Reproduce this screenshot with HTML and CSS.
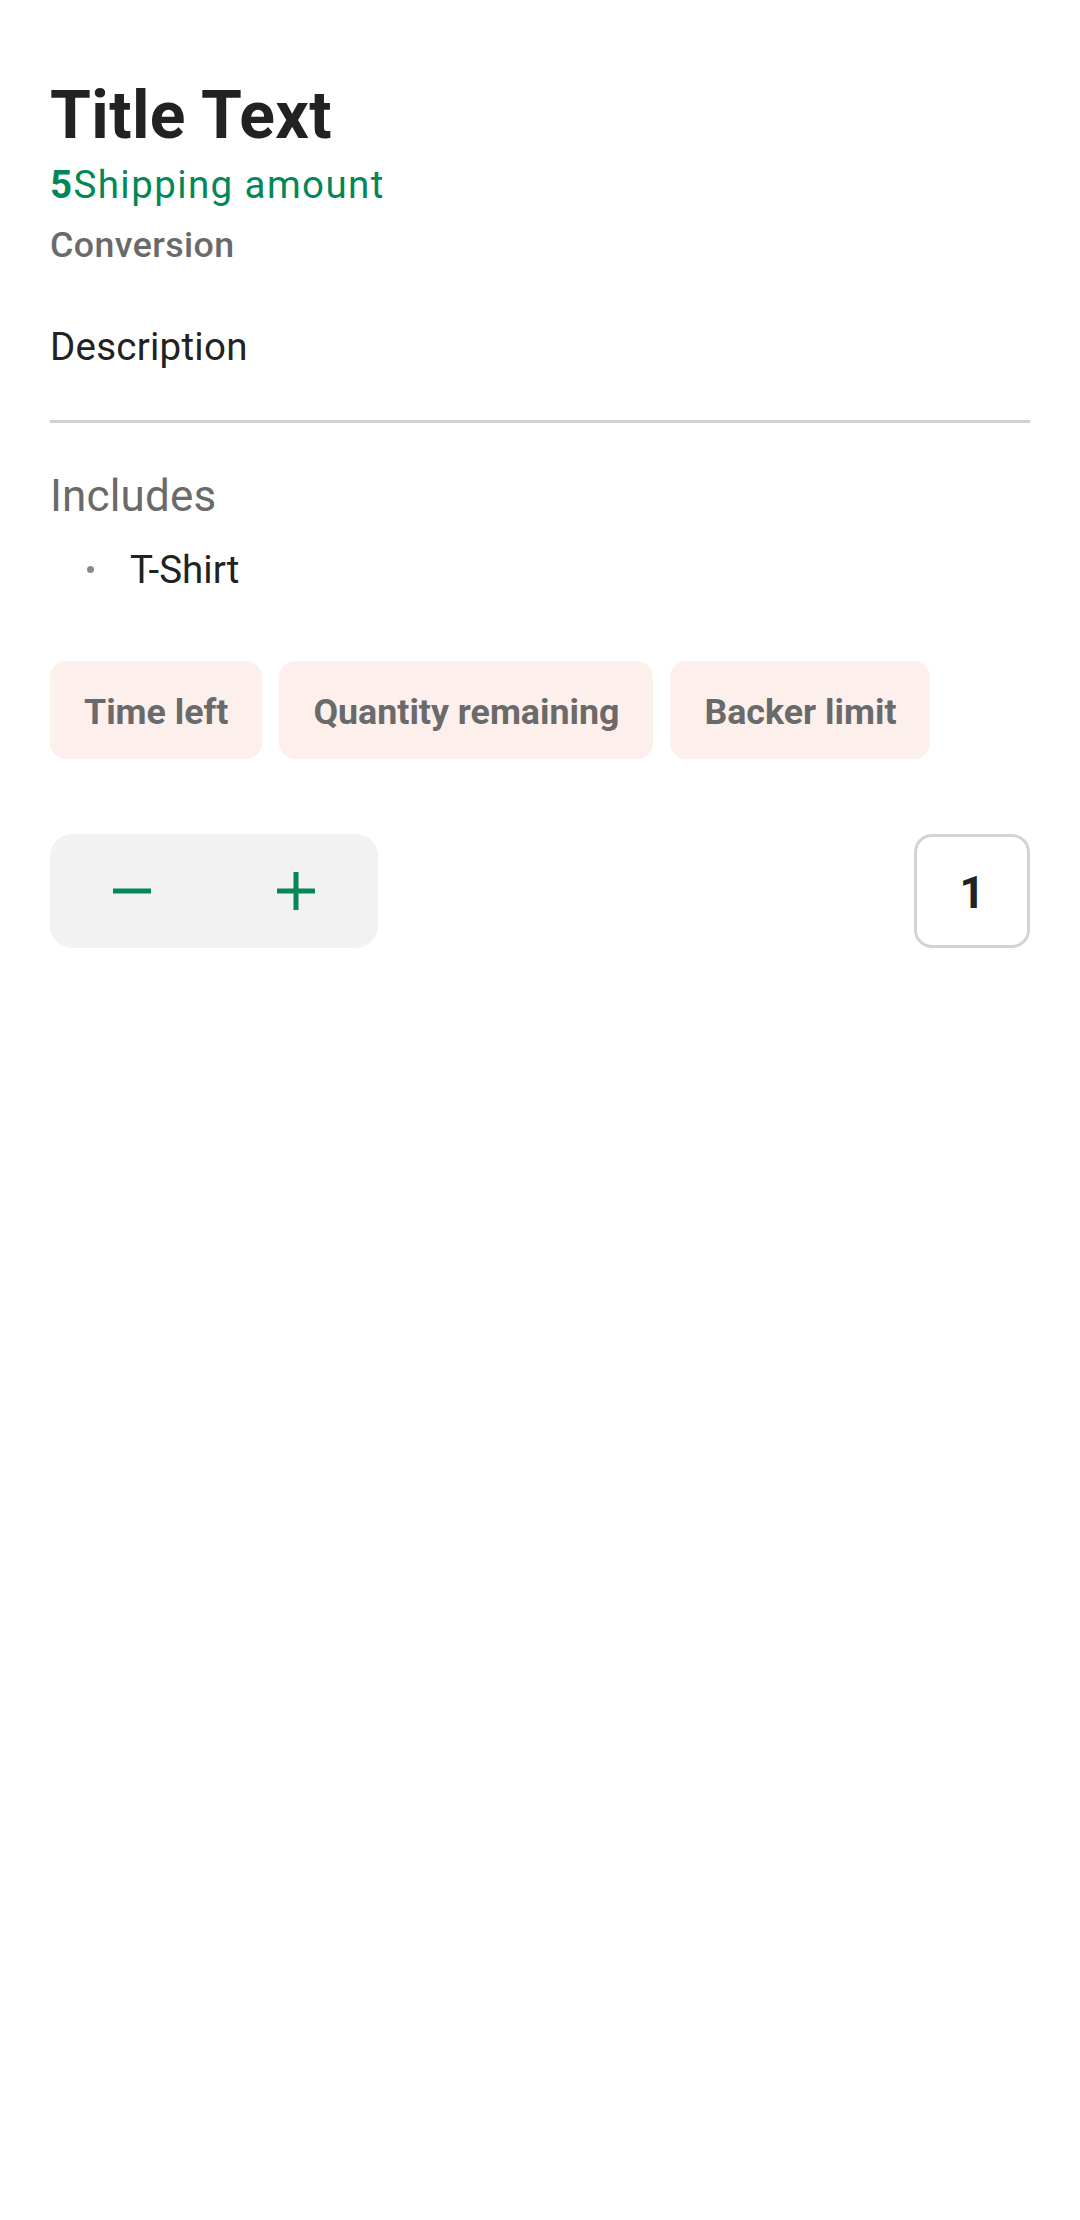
FILE: index.html
```html
<!DOCTYPE html>
<html>
<head>
<meta charset="utf-8">
<link rel="stylesheet" href="styles.css">
</head>
<body>
<main class="page">
  <h1 class="title">Title Text</h1>
  <div class="shipping"><span class="shipping-amount">5</span>Shipping amount</div>
  <div class="conversion">Conversion</div>
  <p class="description">Description</p>
  <hr class="divider">
  <h2 class="includes-title">Includes</h2>
  <ul class="includes-list">
    <li class="includes-item"><span class="bullet"></span><span>T-Shirt</span></li>
  </ul>
  <div class="chips">
    <span class="chip">Time left</span>
    <span class="chip">Quantity remaining</span>
    <span class="chip">Backer limit</span>
  </div>
  <div class="quantity-row">
    <div class="stepper">
      <button class="step-btn" aria-label="Decrease">
        <svg width="38" height="38" viewBox="0 0 38 38"><rect x="0" y="16.5" width="38" height="5" fill="#038757"/></svg>
      </button>
      <button class="step-btn" aria-label="Increase">
        <svg width="38" height="38" viewBox="0 0 38 38"><rect x="0" y="16.5" width="38" height="5" fill="#038757"/><rect x="16.5" y="0" width="5" height="38" fill="#038757"/></svg>
      </button>
    </div>
    <div class="qty-box">1</div>
  </div>
</main>
</body>
</html>
```

FILE: styles.css
```css
html, body {
  margin: 0;
  padding: 0;
  background: #ffffff;
}

body {
  font-family: Roboto, "Noto Sans", "Liberation Sans", sans-serif;
  color: #222222;
}

.page {
  padding: 77px 50px 0 50px;
  display: flex;
  flex-direction: column;
}

.title {
  margin: 0;
  font-size: 66px;
  font-weight: 700;
  line-height: normal;
  letter-spacing: 0.4px;
  color: #222222;
}

.shipping {
  margin-top: 8px;
  font-size: 38.5px;
  line-height: normal;
  letter-spacing: 1.4px;
  color: #038757;
}

.shipping-amount {
  font-weight: 700;
}

.conversion {
  margin-top: 17px;
  font-size: 35.75px;
  font-weight: 500;
  line-height: normal;
  letter-spacing: 0.4px;
  color: #6a6a6a;
}

.description {
  margin: 58px 0 0 0;
  font-size: 38.5px;
  line-height: normal;
  letter-spacing: 0.25px;
  color: #222222;
}

.divider {
  margin: 51px 0 0 0;
  border: 0;
  height: 3px;
  background: #d1d1d1;
}

.includes-title {
  margin: 47px 0 0 0;
  font-size: 44px;
  font-weight: 400;
  line-height: normal;
  letter-spacing: 0.15px;
  color: #6a6a6a;
}

.includes-list {
  list-style: none;
  margin: 25px 0 0 0;
  padding: 0;
}

.includes-item {
  display: flex;
  align-items: center;
  font-size: 38.5px;
  line-height: normal;
  color: #222222;
}

.bullet {
  width: 7px;
  height: 7px;
  border-radius: 50%;
  background: #8a8a8a;
  margin-left: 37px;
  margin-right: 36px;
}

.chips {
  margin-top: 69px;
  display: flex;
  gap: 17px;
}

.chip {
  background: #fdf0ec;
  border-radius: 16px;
  padding: 30px 34px 26px 34px;
  font-size: 35.75px;
  font-weight: 700;
  line-height: normal;
  color: #6a6a6a;
}

.quantity-row {
  margin-top: 75px;
  display: flex;
  justify-content: space-between;
  align-items: center;
}

.stepper {
  display: flex;
  width: 328px;
  height: 114px;
  background: #f2f2f2;
  border-radius: 22px;
}

.step-btn {
  flex: 1;
  border: 0;
  background: transparent;
  padding: 0;
  display: flex;
  align-items: center;
  justify-content: center;
}

.step-btn svg {
  display: block;
}

.qty-box {
  box-sizing: border-box;
  width: 116px;
  height: 114px;
  padding-top: 4px;
  border: 3px solid #d4d4d4;
  border-radius: 18px;
  display: flex;
  align-items: center;
  justify-content: center;
  font-size: 44px;
  font-weight: 700;
  color: #222222;
}
```
